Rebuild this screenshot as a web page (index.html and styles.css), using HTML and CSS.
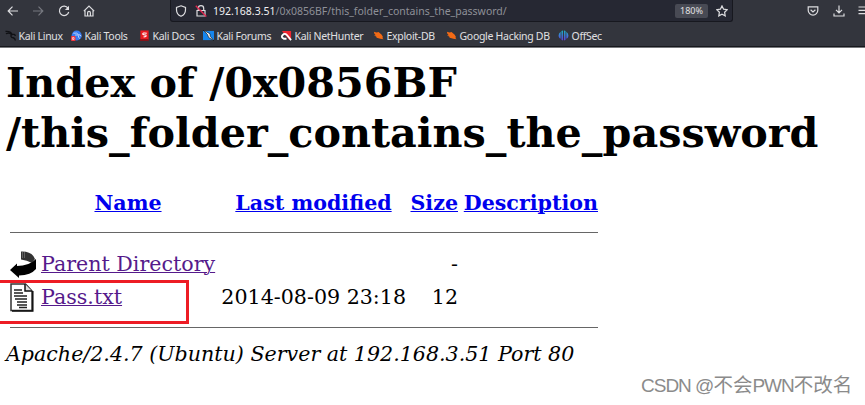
FILE: index.html
```html
<!DOCTYPE html>
<html lang="en">
<head>
<meta charset="utf-8">
<title>Index of /0x0856BF/this_folder_contains_the_password</title>
<link rel="stylesheet" href="styles.css">
</head>
<body>
<header class="chrome">
  <div class="nav">
    <div class="buttons">
      <svg viewBox="0 0 12 12"><path d="M11 6H1.500M5.500 1.700L1.200 6l4.300 4.300"/></svg>
      <svg class="dim" viewBox="0 0 12 12"><path d="M1 6h9.500M6.500 1.700L10.800 6l-4.300 4.300"/></svg>
      <svg viewBox="0 0 12 12"><path d="M10 3.200A4.700 4.700 0 1 0 10.700 7"/><path class="solid" d="M11 .8v4.100H6.900z"/></svg>
      <svg viewBox="0 0 12 12"><path d="M.8 6.200L6 1l5.200 5.200M2 5.500V11h8V5.500M4.600 11V7.800q0-1.400 1.400-1.400t1.400 1.400V11"/></svg>
    </div>
    <div class="url">
      <svg class="shield" viewBox="0 0 12 12"><path d="M6 .8l4.500 1.700v2.300Q10.500 9.500 6 11.300Q1.500 9.500 1.500 4.800V2.500z"/></svg>
      <svg class="lock" viewBox="0 0 12 12"><path d="M3.300 5V3.400a2.700 2.700 0 0 1 5.400 0V5M2 5.500h8V11H2z"/><path class="slash" d="M.8.8l10.500 10.700"/></svg>
      <span class="address"><b>192.168.3.51</b>/0x0856BF/this_folder_contains_the_password/</span>
      <span class="zoom">180%</span>
      <svg class="star" viewBox="0 0 12 12"><path d="M6 .9l1.600 3.300 3.600.5-2.600 2.500.6 3.700L6 9.200l-3.200 1.700.6-3.700L.8 4.700l3.600-.5z"/></svg>
    </div>
    <div class="tools">
      <svg viewBox="0 0 12 12"><path d="M1.200 1.800h9.600v3.500a4.800 4.800 0 0 1-9.600 0zM3.600 4.700L6 6.900l2.400-2.200"/></svg>
      <svg viewBox="0 0 12 12"><path d="M6 .5v7M3 4.800l3 3 3-3M1 8.500V11h10V8.500"/></svg>
      <svg viewBox="0 0 12 12"><path d="M.5 2h11M.5 5.300h11M.5 8.600h11"/></svg>
    </div>
  </div>
  <nav class="bookmarks">
    <a><svg viewBox="0 0 12 12"><path class="dragon" d="M.5 1.500Q6 1 7.500 4.500M1 4Q5 2.500 7 5q4-1 4.200 1.500M7 5Q5.500 8 9 8.500q2 .5 2.300 3"/></svg><span>Kali Linux</span></a>
    <a><svg viewBox="0 0 12 12"><circle cx="6.200" cy="6" r="5.500" fill="#367bf0"/><path class="streak" d="M2.500 3.500q4.500-1 5.500 1.500 2.500 0 3 2M4.500 5.500q3-.5 3.500.500 0 2 1.500 3.500"/><rect y="6.500" width="5" height="5.500" rx="1" fill="#f0353d"/><path class="streak" d="M1.700 8.300h1.600v2H1.700z"/></svg><span>Kali Tools</span></a>
    <a><svg viewBox="0 0 12 12"><path d="M1.500.5h9V11h-9z" fill="#e91b20"/><path d="M1 10h9.500v2H1z" fill="#851218"/><path class="white" d="M8.500 3.500Q4 2.500 4 4.500q1 1.200 3.500 1 1.500 2-2.500 2"/></svg><span>Kali Docs</span></a>
    <a><svg viewBox="0 0 12 12"><path d="M0 1h12v10H0z" fill="#1686ed"/><path class="wing" d="M0 0l7.500 4 .5 3 4 5-6-4-1-3z"/></svg><span>Kali Forums</span></a>
    <a><svg viewBox="0 0 12 12"><path d="M1 1h10v8L9 11 5 6z" fill="#ee2630"/><path class="hook" d="M11 11L6.500 5.500Q4 3 1.800 5.500T3 9.500h3"/></svg><span>Kali NetHunter</span></a>
    <a><svg viewBox="0 0 12 12"><path class="bug" d="M1 2l3 .6 2-.5 3.500 3L11 8l-1 .4L11.500 10 8 9.500 4 8.500l-.5-1.300L1 6l2-.3L1.500 4z"/></svg><span>Exploit-DB</span></a>
    <a><svg viewBox="0 0 12 12"><path class="bug" d="M1 2l3 .6 2-.5 3.500 3L11 8l-1 .4L11.500 10 8 9.500 4 8.500l-.5-1.300L1 6l2-.3L1.500 4z"/></svg><span>Google Hacking DB</span></a>
    <a><svg viewBox="0 0 12 12"><defs><linearGradient id="os" x2="0" y2="1"><stop stop-color="#17b7c8"/><stop offset="1" stop-color="#633be0"/></linearGradient></defs><path d="M5.400.5v11l-1.600-1V1.200zM2.900 2v7.500L1.500 8.800Q-.8 5 2.900 2zM6.600.5v11l1.600-1V1.200zM9.100 2v7.500l1.400-.7Q12.800 5 9.100 2z" fill="url(#os)"/></svg><span>OffSec</span></a>
  </nav>
</header>
<main>
  <h1>Index of /0x0856BF<br>/this_folder_contains_the_password</h1>
  <table>
    <colgroup><col class="c-icon"><col class="c-name"><col class="c-date"><col class="c-size"><col class="c-desc"></colgroup>
    <tr class="head"><th></th><th><a>Name</a></th><th class="gap"><a>Last modified</a></th><th class="num"><a>Size</a></th><th class="num"><a>Description</a></th></tr>
    <tr class="rule"><td colspan="5"><hr></td></tr>
    <tr class="entry"><td><svg class="back" viewBox="0 0 27 27"><path d="M11 .5Q22 0 25 8l-3 4Q17 9 11 8.500z" fill="#333"/><path d="M12 2h4M12 4h4M12 6h4" stroke="#aaa" stroke-width=".8" stroke-dasharray="1 1"/><path d="M0 19l7-6.500V15q12 0 19-7v10q-5 6-17 6.500v2.500z"/></svg></td><td><a class="seen">Parent Directory</a></td><td></td><td class="num">-</td><td></td></tr>
    <tr class="entry"><td><svg class="doc" viewBox="0 0 24 29"><path d="M1 1h14.500L22 8v19.500H1z" fill="#fff" stroke="#333" stroke-width="1.500"/><path d="M2 28h20.800V8" fill="none" stroke="#111" stroke-width="1.500"/><path d="M15 1v7h7" fill="#ddd" stroke="#111" stroke-width="1.500"/><path d="M4 7h8M4 10h9M4 13h13M5 16h12M7 19h10M7 22h10M9 24.500h8" stroke="#222" stroke-width="1.500"/></svg></td><td><a class="seen">Pass.txt</a></td><td class="num">2014-08-09 23:18</td><td class="num">12</td><td></td></tr>
    <tr class="rule last"><td colspan="5"><hr></td></tr>
  </table>
  <address>Apache/2.4.7 (Ubuntu) Server at 192.168.3.51 Port 80</address>
  <div class="highlight"></div>
  <div class="watermark"><span>CSDN @</span>不会<span>PWN</span>不改名</div>
</main>
</body>
</html>
```
FILE: styles.css
```css
* { box-sizing: border-box; }
body { margin: 0; height: 405px; overflow: hidden; background: #fff; color: #000; font-family: "DejaVu Serif", serif; }
svg { display: block; flex: none; }

.chrome { height: 48px; overflow: hidden; background: #33353d; border-bottom: 1px solid #77787c; box-shadow: inset 0 -1px #17181d; color: #e0e0e2; font: 10.5px/14px "Noto Sans", sans-serif; white-space: nowrap; }
.nav { display: flex; height: 22px; padding-left: 7px; }
.nav svg { width: 12px; height: 12px; fill: none; stroke: #dddde0; stroke-width: 1.2; }
.nav svg.dim { stroke: #777980; }
.nav svg .solid { fill: #dddde0; stroke: none; }
.nav svg .slash { stroke: #e22850; stroke-width: 1.4; }
.buttons { display: flex; flex: none; gap: 13.3px; width: 163px; padding-top: 5px; }
.url { display: flex; align-items: center; width: 563px; flex: none; height: 22px; padding: 0 4px; background: #262833; border: 1px solid #17181f; border-top: 0; border-radius: 0 0 3px 3px; color: #8e9098; }
.lock { margin-left: 8px; }
.address { margin-left: 6px; flex: 1; }
.address b { color: #f0f0f2; font-weight: 400; }
.zoom { width: 33px; height: 14px; margin-right: 8px; border-radius: 2px; background: #484a54; color: #e0e0e2; text-align: center; font-size: 9px; }
.tools { display: flex; flex: none; gap: 13.7px; padding: 5px 0 0 74px; }

.bookmarks { display: grid; grid-template-columns: 66px 68px 64px 78px 92px 73px 112px 60px; height: 24px; padding: 3px 0 0 5px; align-items: center; letter-spacing: -.3px; }
.bookmarks a { display: flex; align-items: center; }
.bookmarks svg { width: 11px; height: 11px; margin-right: 2.5px; fill: none; }
.dragon { stroke: #101115; stroke-width: 1.5; }
.white { stroke: #fff; stroke-width: 1.1; }
.streak { stroke: #fff; stroke-width: .7; }
.wing { fill: #fff; stroke: #111; stroke-width: .7; }
.hook { stroke: #fff; stroke-width: 2; }
.bug { fill: #f26a15; }

main { position: relative; height: 357px; padding: 10px 6px 0; font-size: 20.6px; }
h1 { margin: 0 0 33px; font-size: 41.3px; line-height: 49.5px; white-space: nowrap; }
table { width: 588px; margin-left: 4px; table-layout: fixed; border-collapse: collapse; white-space: nowrap; line-height: 25px; }
th, td { padding: 0; }
.c-icon { width: 31px; }
.c-name { width: 174px; }
.c-date { width: 191px; }
.c-size { width: 52px; }
.c-desc { width: 140px; }
.gap { padding-left: 6px; }
.head { height: 27px; }
a { text-decoration: none; }
th a { color: #00e; text-decoration: underline; text-decoration-thickness: 1px; }
.seen { color: #551a8b; text-decoration: underline; text-decoration-thickness: 1px; }
.rule { height: 31px; }
.rule.last { height: 27px; }
hr { height: 1px; margin: 0; border: 0; background: #666; }
.entry { height: 33px; }
.num { text-align: right; }
.back { width: 27px; height: 27px; }
.doc { width: 24px; height: 29px; }
address { margin-top: 1px; line-height: 25px; white-space: nowrap; }

.highlight { position: absolute; left: -3px; top: 232px; width: 192px; height: 44px; border: 3px solid #ed1c24; }
.watermark { position: absolute; left: 641px; top: 323px; color: #8b8b8b; font: 19.5px/28px "Liberation Sans", "Noto Sans CJK SC", sans-serif; white-space: nowrap; }
.watermark span { font-size: 19px; letter-spacing: -1px; }
```
